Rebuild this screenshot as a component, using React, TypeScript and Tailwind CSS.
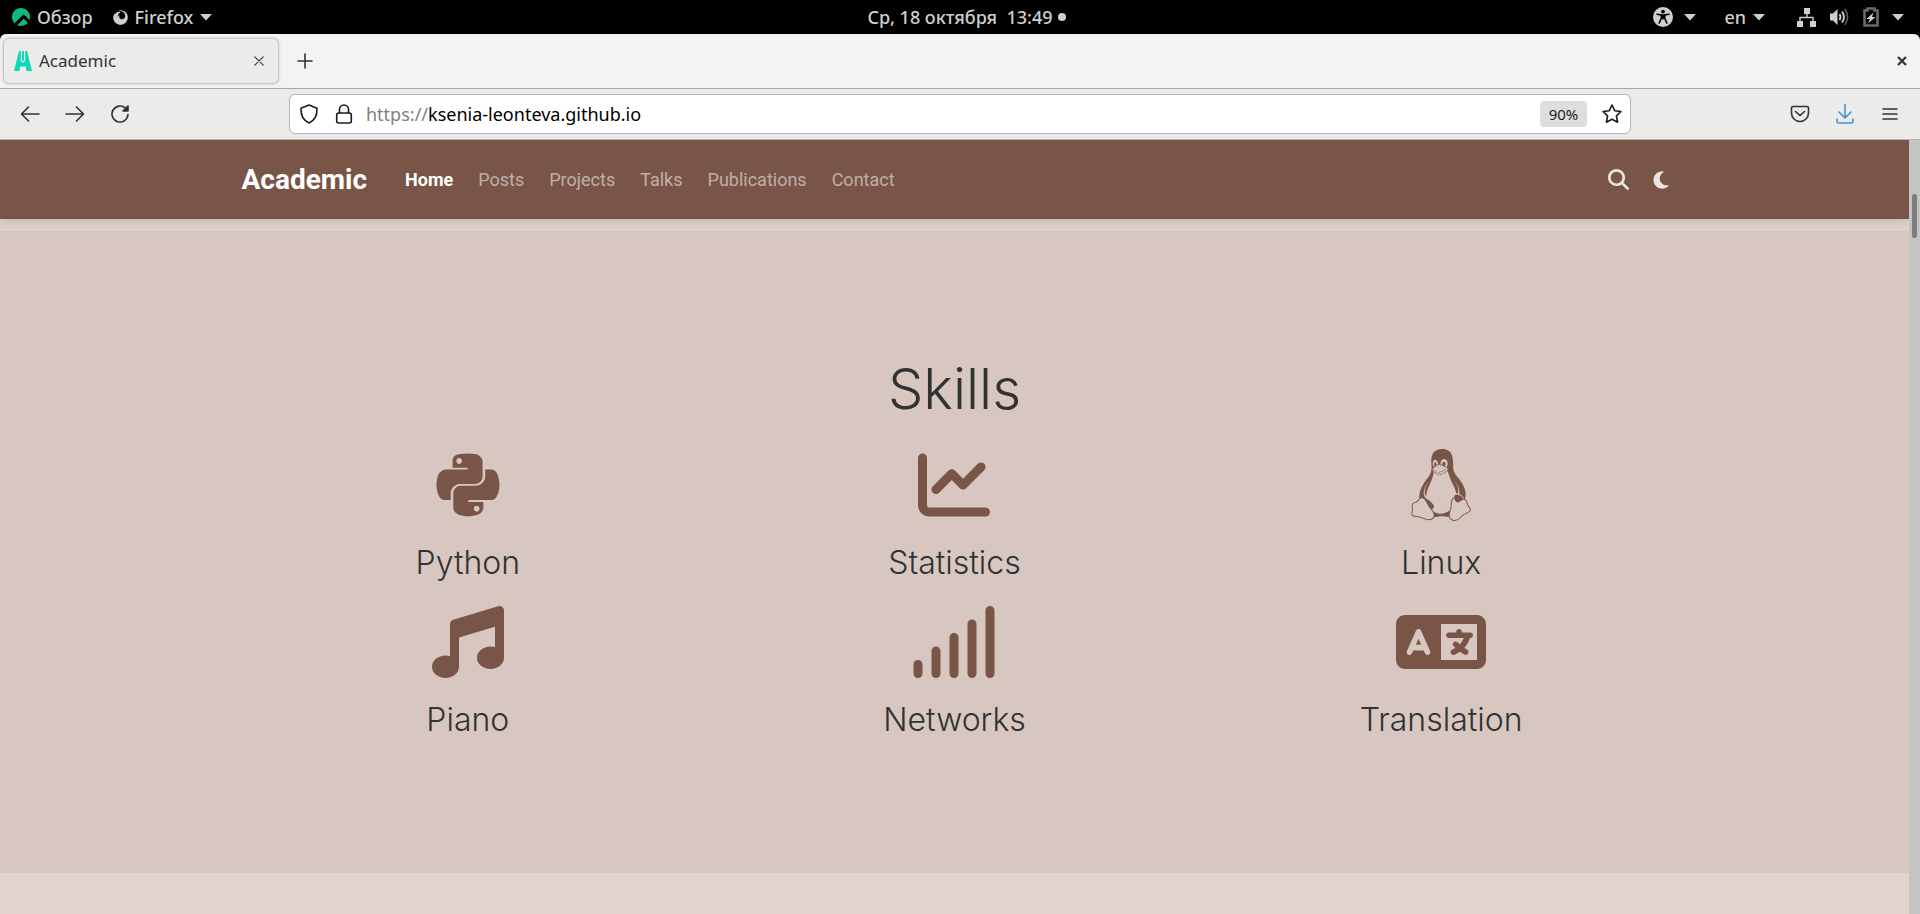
import React from "react";
import { FaChartLine, FaFirefox, FaLanguage, FaLinux, FaMagnifyingGlass, FaMoon, FaMusic, FaPython, FaSignal } from "react-icons/fa6";
import { SiRockylinux } from "react-icons/si";

const links = ["Home", "Posts", "Projects", "Talks", "Publications", "Contact"];

const skills = [
  { name: "Python", Icon: FaPython },
  { name: "Statistics", Icon: FaChartLine },
  { name: "Linux", Icon: FaLinux },
  { name: "Piano", Icon: FaMusic },
  { name: "Networks", Icon: FaSignal },
  { name: "Translation", Icon: FaLanguage },
];

function Caret() {
  return (
    <svg width="12" height="7" viewBox="0 0 12 7" fill="currentColor" aria-hidden="true">
      <path d="M0 0h12L6 6.5z" />
    </svg>
  );
}

function Stroke({ size = 20, className = "", children }: { size?: number; className?: string; children: React.ReactNode }) {
  return (
    <svg width={size} height={size} viewBox="0 0 20 20" fill="none" stroke="currentColor" strokeWidth="1.6" strokeLinecap="round" strokeLinejoin="round" className={className} aria-hidden="true">
      {children}
    </svg>
  );
}

function SystemBar() {
  return (
    <header className="grid h-[34px] grid-cols-[1fr_auto_1fr] items-center bg-black px-3 text-[18px] leading-6 font-medium text-[#cfcfcf]">
      <div className="flex items-center gap-5">
        <button className="flex items-center gap-[7px]">
          <SiRockylinux size={18} className="text-[#10b981]" />
          Обзор
        </button>
        <button className="flex items-center gap-[7px]">
          <FaFirefox size={15} />
          Firefox
          <Caret />
        </button>
      </div>
      <button className="flex items-center gap-[5px] pl-[13px] whitespace-pre">
        Ср, 18 октября{"  "}13:49
        <span className="size-2 rounded-full bg-[#cfcfcf]" />
      </button>
      <div className="flex items-center justify-end gap-7 pr-1">
        <button className="flex items-center gap-[11px]" aria-label="Accessibility">
          <svg width="20" height="20" viewBox="0 0 20 20" aria-hidden="true">
            <circle cx="10" cy="10" r="10" fill="currentColor" />
            <circle cx="10" cy="4.6" r="1.9" fill="#000" />
            <path d="M4 7.2 8.3 8v3.2L6.2 16M16 7.2 11.7 8v3.2L13.8 16" stroke="#000" strokeWidth="1.6" fill="none" strokeLinecap="round" />
            <path d="M8 7.3h4v5H8z" fill="#000" />
          </svg>
          <Caret />
        </button>
        <button className="flex items-center gap-[7px]">
          en
          <Caret />
        </button>
        <button className="ml-1 flex items-center gap-[13px]" aria-label="System">
          <svg width="20" height="19" viewBox="0 0 20 19" fill="currentColor" aria-hidden="true">
            <path d="M7 0h6v6H7zM0 13h6v6H0zM13 13h6v6h-6z" />
            <path d="M10 5v5M3 14v-4.500h13V14" fill="none" stroke="currentColor" strokeWidth="1.400" />
          </svg>
          <svg width="20" height="18" viewBox="0 0 20 18" fill="none" stroke="currentColor" strokeWidth="1.8" aria-hidden="true">
            <path d="M0 5.500h3L7.500 1v16L3 12.500H0z" fill="currentColor" stroke="none" />
            <path d="M9.500 6q2 3 0 6" />
            <path d="M12 3.500q4 5.500 0 11" />
            <path d="M15 1q5 8 0 16" stroke="#555" />
          </svg>
          <svg width="16" height="20" viewBox="0 0 16 20" fill="none" aria-hidden="true">
            <path d="M1.500 3.500h3v-2h7v2h3v15h-13z" stroke="#6a6a6a" strokeWidth="2.600" />
            <path d="M10.500 5.500 3.500 12h3.500l-2 4.500 7.500-6.500H9z" fill="currentColor" />
          </svg>
          <Caret />
        </button>
      </div>
    </header>
  );
}

function TabStrip() {
  return (
    <div className="bg-black">
      <div className="flex h-[55px] items-center rounded-t-md border-b border-[#a8a8a8] bg-[#f3f3f3] pr-3 pl-[3px] text-[#2e3436]">
        <div className="flex h-[46px] w-[276px] items-center rounded-md border border-[#c6c5d0] bg-[#ebebe9] pr-3 pl-[10px] shadow-[0_0_3px_#c4c4d0]">
          <svg width="18" height="20" viewBox="0 0 18 20" aria-hidden="true">
            <path d="M5 0h1.800v9.500L9 12l2.200-2.500V0H13l5 20h-5.500l-.8-4.500H6.300L5.500 20H0z" fill="#0fd8b8" />
            <path d="M8 0h2v9L9 10.500 8 9z" fill="#0fd8b8" />
          </svg>
          <span className="ml-[7px] flex-1 text-[17px]">Academic</span>
          <button aria-label="Close tab">
            <Stroke size={14}>
              <path d="m4 4 12 12M16 4 4 16" />
            </Stroke>
          </button>
        </div>
        <button className="ml-4" aria-label="New tab">
          <Stroke>
            <path d="M10 3v14M3 10h14" />
          </Stroke>
        </button>
        <button className="ml-auto" aria-label="Close window">
          <svg width="12" height="12" viewBox="0 0 12 12" stroke="currentColor" strokeWidth="2.200" aria-hidden="true">
            <path d="m2 2 8 8M10 2l-8 8" />
          </svg>
        </button>
      </div>
    </div>
  );
}

function Toolbar() {
  return (
    <div className="grid h-[51px] grid-cols-[269px_1fr_269px] items-center border-b border-[#b4b4b2] bg-[#ebebe9] px-5 text-[#2e3436]">
      <div className="flex items-center gap-[25px]">
        <button aria-label="Back">
          <Stroke>
            <path d="M19 10H2M8.500 3 1.500 10l7 7" />
          </Stroke>
        </button>
        <button aria-label="Forward">
          <Stroke>
            <path d="M1 10h17M11.500 3l7 7-7 7" />
          </Stroke>
        </button>
        <button aria-label="Reload">
          <Stroke>
            <path d="M18 10.500A8 8 0 1 1 15.500 4.200L17 6" />
            <path d="M18 2v5h-5z" fill="currentColor" />
          </Stroke>
        </button>
      </div>
      <div className="flex h-10 items-center rounded-md border border-[#b4b4b2] bg-white pr-2 pl-[9px] text-[#1a1a1a]">
        <Stroke>
          <path d="M10 1 18 4.200C18.300 11 15.500 16.500 10 19 4.500 16.500 1.700 11 2 4.200z" />
        </Stroke>
        <Stroke className="ml-[15px]">
          <rect x="2.700" y="9" width="14.600" height="10" rx="2" />
          <path d="M5.500 9V5.500a4.500 4.500 0 0 1 9 0V9" />
        </Stroke>
        <a href="https://ksenia-leonteva.github.io" className="ml-3 flex-1 text-[18px] text-black">
          <span className="text-[#808080]">https://</span>ksenia-leonteva.github.io
        </a>
        <button className="h-[26px] w-[47px] rounded-sm bg-[#dedede] text-[15px]">90%</button>
        <button className="ml-[15px]" aria-label="Bookmark">
          <Stroke>
            <path d="m10 1 2.700 5.700 6.300.8-4.600 4.300 1.200 6.400L10 15.300l-5.600 2.900 1.200-6.400L1 7.500l6.300-.8z" />
          </Stroke>
        </button>
      </div>
      <div className="flex items-center justify-end gap-[25px]">
        <button aria-label="Pocket">
          <Stroke>
            <path d="M3 2.500h14q1.500 0 1.500 1.500V9A8.500 8.500 0 0 1 1.500 9V4Q1.500 2.500 3 2.500z" />
            <path d="m5.500 7.500 4.500 4 4.500-4" />
          </Stroke>
        </button>
        <button className="text-[#4a90d9]" aria-label="Downloads">
          <Stroke>
            <path d="M10 .8v13M4 8l6 6 6-6M2 15v2q0 2 2 2h12q2 0 2-2v-2" />
          </Stroke>
        </button>
        <button aria-label="Menu">
          <Stroke>
            <path d="M3 5h14M3 10h14M3 15h14" />
          </Stroke>
        </button>
      </div>
    </div>
  );
}

function SiteNav() {
  return (
    <nav className="relative bg-[#795548] shadow-[0_4px_10px_rgba(0,0,0,0.12)]">
      <div className="mx-auto flex h-[79px] max-w-[1460px] items-center pr-[14px] pl-[17px] font-['Roboto',sans-serif] text-[18px]">
        <a href="#top" className="mr-[38px] text-[28px] font-bold text-white">Academic</a>
        <ul className="flex gap-[25px]">
          {links.map((link, i) => (
            <li key={link}>
              <a href={"#" + link.toLowerCase()} className={i === 0 ? "font-bold text-white" : "text-[#c0aea7]"}>
                {link}
              </a>
            </li>
          ))}
        </ul>
        <div className="ml-auto flex items-center gap-[22px] text-[#eae3e1]">
          <button aria-label="Search">
            <FaMagnifyingGlass size={21} />
          </button>
          <button aria-label="Theme">
            <FaMoon size={20} />
          </button>
        </div>
      </div>
    </nav>
  );
}

export default function App() {
  return (
    <div className="flex min-h-screen flex-col font-['Noto_Sans',sans-serif]">
      <SystemBar />
      <TabStrip />
      <Toolbar />
      <div className="flex flex-1">
        <main className="flex-1 overflow-hidden bg-[#e1d4d0]">
          <SiteNav />
          <section className="mt-3 bg-[#d8c7c0] pt-[126px] pb-[135px] font-['Inter',sans-serif] font-light text-[#313333]">
            <h1 className="text-center text-[56px] leading-[64px]">Skills</h1>
            <div className="mx-auto mt-7 grid max-w-[1460px] grid-cols-3 gap-y-[25px]">
              {skills.map(({ name, Icon }) => (
                <div key={name} className="flex flex-col items-center">
                  <Icon size={72} className={name === "Networks" || name === "Translation" ? "w-[90px] text-[#795548]" : "text-[#795548]"} />
                  <h2 className="mt-6 text-[32px] leading-9">{name}</h2>
                </div>
              ))}
            </div>
          </section>
        </main>
        <div className="w-[11px] bg-[#c3c5c4] pt-[54px] pl-[3px]">
          <div className="h-11 w-[5px] rounded-full bg-[#7b7e7d]" />
        </div>
      </div>
    </div>
  );
}
